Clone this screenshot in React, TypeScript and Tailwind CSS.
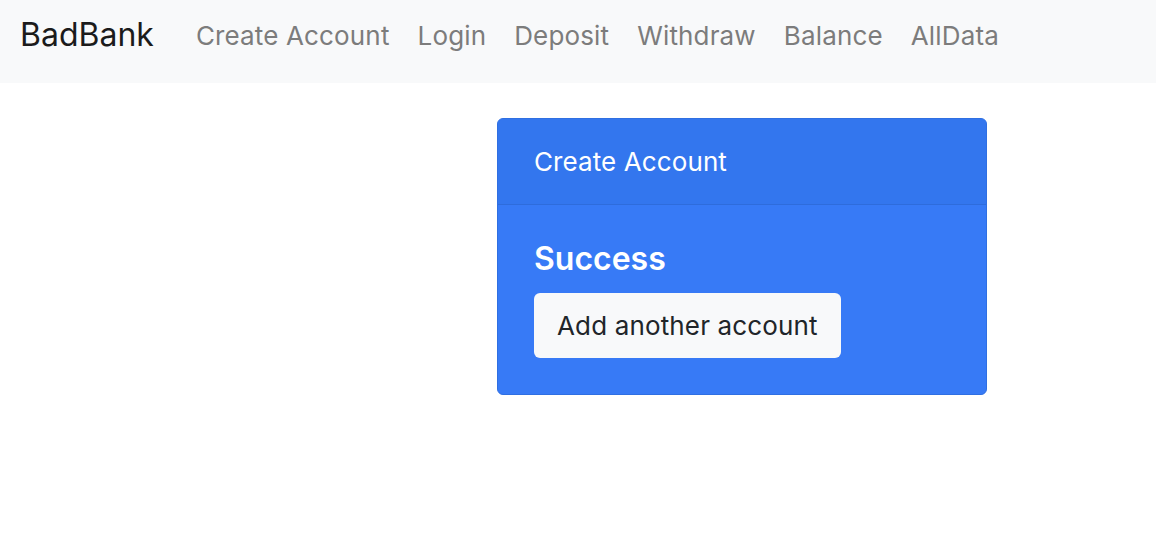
const links = ["Create Account", "Login", "Deposit", "Withdraw", "Balance", "AllData"];

export default function App() {
  return (
    <div className="min-h-[556px] bg-white font-['Inter','Liberation_Sans',sans-serif]">
      <nav className="flex h-[83px] items-center bg-[#f8f9fa] px-[20px] pb-[12px]">
        <a className="text-[32px] leading-[1.2] text-[#1b1b1b] mr-[42px]" href="#">BadBank</a>
        <div className="flex items-center gap-[28px]">
          {links.map((l) => (
            <a key={l} href="#" className="text-[26px] leading-[1.5] tracking-[0.15px] text-[#7c7c7c]">
              {l}
            </a>
          ))}
        </div>
      </nav>

      <div className="pt-[35px] pl-[497px]">
        <div className="w-[490px] overflow-hidden rounded-[6px] border border-[#2f6fe2] bg-[#377af6] text-white">
          <div className="border-b border-[#2e6cdc] bg-[#3376ee] px-[36px] py-[23px] text-[26px] leading-[1.5] tracking-[0.1px]">
            Create Account
          </div>
          <div className="px-[36px] pt-[35px] pb-[36px]">
            <h5 className="text-[32px] font-semibold leading-[1.2]">Success</h5>
            <button className="mt-[15px] rounded-[6px] bg-[#f8f9fa] px-[23px] py-[13px] text-[26px] leading-[1.5] tracking-[0.15px] text-[#212529]">
              Add another account
            </button>
          </div>
        </div>
      </div>
    </div>
  );
}
